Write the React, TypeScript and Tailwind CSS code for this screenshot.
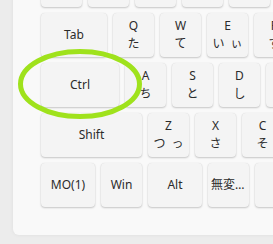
import React from "react";

type K = { w: number; top?: string; sub?: string[]; label?: string };

const rows: K[][] = [
  [{ w: 41 }, { w: 41 }, { w: 41 }, { w: 41 }, { w: 41 }, { w: 41 }],
  [
    { w: 66, label: "Tab" },
    { w: 41, top: "Q", sub: ["た"] },
    { w: 41, top: "W", sub: ["て"] },
    { w: 41, top: "E", sub: ["い", "ぃ"] },
    { w: 41, top: "R", sub: ["す"] },
  ],
  [
    { w: 78, label: "Ctrl" },
    { w: 41, top: "A", sub: ["ち"] },
    { w: 41, top: "S", sub: ["と"] },
    { w: 41, top: "D", sub: ["し"] },
    { w: 41, top: "F", sub: ["は"] },
  ],
  [
    { w: 101, label: "Shift" },
    { w: 41, top: "Z", sub: ["つ", "っ"] },
    { w: 41, top: "X", sub: ["さ"] },
    { w: 41, top: "C", sub: ["そ"] },
  ],
  [
    { w: 54, label: "MO(1)" },
    { w: 41, label: "Win" },
    { w: 54, label: "Alt" },
    { w: 41, label: "無変換" },
    { w: 120, label: "Space" },
  ],
];

function Key({ k }: { k: K }) {
  return (
    <div
      className="h-[44px] shrink-0 rounded-[4px] bg-[#f4f4f4] shadow-[0_1px_2px_rgba(0,0,0,0.2),0_0_1px_rgba(0,0,0,0.12)] flex flex-col items-center justify-center text-[12px] text-[#2b2b2b] px-[3px] overflow-hidden"
      style={{ width: k.w }}
    >
      {k.label ? (
        <span className="block w-full truncate text-center">{k.label}</span>
      ) : k.top ? (
        <>
          <span className="leading-[18px]">{k.top}</span>
          <span className="leading-[18px] flex gap-[6px]">
            {k.sub?.map((s, i) => (
              <span key={i}>{s}</span>
            ))}
          </span>
        </>
      ) : null}
    </div>
  );
}

export default function App() {
  return (
    <div
      className="relative w-[273px] h-[244px] overflow-hidden bg-[#ececec]"
      style={{ fontFamily: '"Noto Sans", "Noto Sans CJK JP", sans-serif' }}
    >
      <div className="ml-[13px] -mt-[60px] w-[400px] bg-[#f9f9f9] rounded-bl-[6px] shadow-[0_0_4px_rgba(0,0,0,0.06)] pl-[28px] pt-[23px] pb-[28px] flex flex-col gap-[6px]">
        {rows.map((row, i) => (
          <div key={i} className="flex gap-[6px]">
            {row.map((k, j) => (
              <Key key={j} k={k} />
            ))}
          </div>
        ))}
      </div>
      <svg className="absolute left-0 top-0" width="273" height="244">
        <ellipse cx="80" cy="84" rx="59.5" ry="32.5" fill="none" stroke="#9fe21c" strokeWidth="5" />
      </svg>
    </div>
  );
}
